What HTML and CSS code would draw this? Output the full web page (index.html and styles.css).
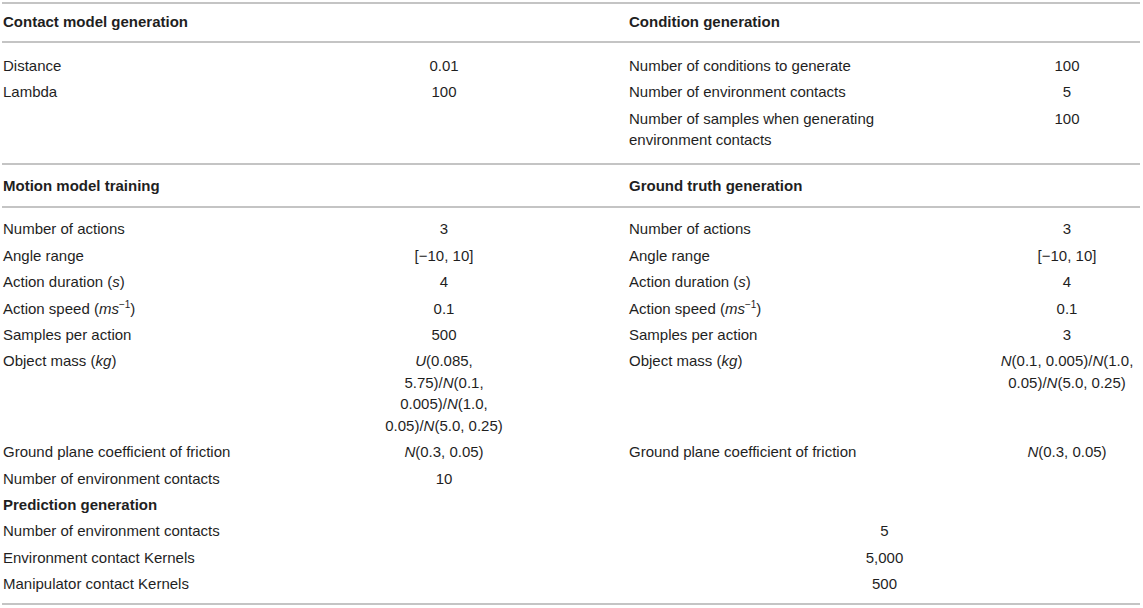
FILE: index.html
```html
<!DOCTYPE html>
<html lang="en">
<head>
<meta charset="utf-8">
<title>Parameters</title>
<link rel="stylesheet" href="styles.css">
</head>
<body>
<div class="table">
  <div class="grid head first">
    <div class="l1 b">Contact model generation</div>
    <div class="l2 b">Condition generation</div>
  </div>
  <div class="grid body one">
    <div class="l1">Distance</div><div class="v1">0.01</div>
    <div class="l2">Number of conditions to generate</div><div class="v2">100</div>
    <div class="l1">Lambda</div><div class="v1">100</div>
    <div class="l2">Number of environment contacts</div><div class="v2">5</div>
    <div class="l2">Number of samples when generating environment contacts</div><div class="v2">100</div>
  </div>
  <div class="grid head second">
    <div class="l1 b">Motion model training</div>
    <div class="l2 b">Ground truth generation</div>
  </div>
  <div class="grid body two">
    <div class="l1">Number of actions</div><div class="v1">3</div>
    <div class="l2">Number of actions</div><div class="v2">3</div>
    <div class="l1">Angle range</div><div class="v1">[−10, 10]</div>
    <div class="l2">Angle range</div><div class="v2">[−10, 10]</div>
    <div class="l1">Action duration (<i>s</i>)</div><div class="v1">4</div>
    <div class="l2">Action duration (<i>s</i>)</div><div class="v2">4</div>
    <div class="l1">Action speed (<i>ms</i><sup>−1</sup>)</div><div class="v1">0.1</div>
    <div class="l2">Action speed (<i>ms</i><sup>−1</sup>)</div><div class="v2">0.1</div>
    <div class="l1">Samples per action</div><div class="v1">500</div>
    <div class="l2">Samples per action</div><div class="v2">3</div>
    <div class="l1">Object mass (<i>kg</i>)</div><div class="v1"><i>U</i>(0.085, 5.75)/<i>N</i>(0.1, 0.005)/<i>N</i>(1.0, 0.05)/<i>N</i>(5.0, 0.25)</div>
    <div class="l2">Object mass (<i>kg</i>)</div><div class="v2"><i>N</i>(0.1, 0.005)/<i>N</i>(1.0, 0.05)/<i>N</i>(5.0, 0.25)</div>
    <div class="l1">Ground plane coefficient of friction</div><div class="v1"><i>N</i>(0.3, 0.05)</div>
    <div class="l2">Ground plane coefficient of friction</div><div class="v2"><i>N</i>(0.3, 0.05)</div>
    <div class="l1">Number of environment contacts</div><div class="v1">10</div>
    <div class="wide b">Prediction generation</div>
    <div class="wide">Number of environment contacts</div><div class="wv">5</div>
    <div class="wide">Environment contact Kernels</div><div class="wv">5,000</div>
    <div class="wide">Manipulator contact Kernels</div><div class="wv">500</div>
  </div>
</div>
</body>
</html>
```

FILE: styles.css
```css
html, body {
  margin: 0;
  padding: 0;
  background: #ffffff;
}

body {
  font-family: "Liberation Sans", Arial, sans-serif;
  font-size: 15px;
  color: #1f1f1f;
}

.table {
  width: 1138px;
  margin: 2px 0 0 2px;
}

.grid {
  display: grid;
  grid-template-columns: 370px 144px 113px 365px 146px;
  line-height: 21.4px;
  border-bottom: 2px solid #c4c4c4;
}

.grid > div {
  padding-top: 2.5px;
  padding-bottom: 2.5px;
}

.first {
  border-top: 2px solid #c4c4c4;
}

.head.first {
  padding: 4px 0 7px;
}

.head.second {
  padding: 7px 0 8px;
}

.body.one {
  padding: 9px 0 10px;
}

.body.two {
  padding: 7.5px 0 6px;
}

.b {
  font-weight: bold;
}

.l1 {
  grid-column: 1;
  padding-left: 1px;
}

.v1 {
  grid-column: 2;
  text-align: center;
  padding-left: 6px;
  padding-right: 6px;
}

.l2 {
  grid-column: 4;
  padding-right: 60px;
}

.v2 {
  grid-column: 5;
  text-align: center;
}

.wide {
  grid-column: 1 / 3;
  padding-left: 1px;
}

.wv {
  grid-column: 4 / 6;
  text-align: center;
}

i {
  font-style: italic;
}

sup {
  font-size: 10px;
  line-height: 0;
  vertical-align: 6px;
}
```
